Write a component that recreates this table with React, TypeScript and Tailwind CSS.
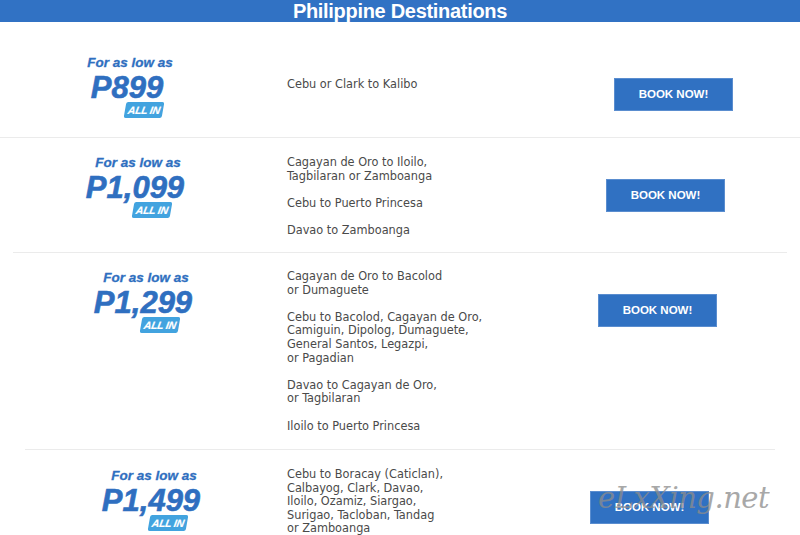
import React from 'react';

type Deal = {
  price: string;
  routes: string[][];
  rowH: string;
  priceMl: string;
  padTop: string;
  textTop: string;
  btnTop: string;
  btnMr: string;
};

const deals: Deal[] = [
  {
    price: 'P899',
    routes: [['Cebu or Clark to Kalibo']],
    rowH: 'h-[115px]',
    priceMl: 'ml-[70px]',
    padTop: 'pt-[34px]',
    textTop: 'pt-[55px]',
    btnTop: 'pt-[56px]',
    btnMr: 'mr-[67px]',
  },
  {
    price: 'P1,099',
    routes: [
      ['Cagayan de Oro to Iloilo,', 'Tagbilaran or Zamboanga'],
      ['Cebu to Puerto Princesa'],
      ['Davao to Zamboanga'],
    ],
    rowH: 'h-[114px]',
    priceMl: 'ml-[78px]',
    padTop: 'pt-[18px]',
    textTop: 'pt-[17px]',
    btnTop: 'pt-[41px]',
    btnMr: 'mr-[75px]',
  },
  {
    price: 'P1,299',
    routes: [
      ['Cagayan de Oro to Bacolod', 'or Dumaguete'],
      ['Cebu to Bacolod, Cagayan de Oro,', 'Camiguin, Dipolog, Dumaguete,', 'General Santos, Legazpi,', 'or Pagadian'],
      ['Davao to Cagayan de Oro,', 'or Tagbilaran'],
      ['Iloilo to Puerto Princesa'],
    ],
    rowH: 'h-[196px]',
    priceMl: 'ml-[86px]',
    padTop: 'pt-[18px]',
    textTop: 'pt-[16px]',
    btnTop: 'pt-[41px]',
    btnMr: 'mr-[83px]',
  },
  {
    price: 'P1,499',
    routes: [
      ['Cebu to Boracay (Caticlan),', 'Calbayog, Clark, Davao,', 'Iloilo, Ozamiz, Siargao,', 'Surigao, Tacloban, Tandag', 'or Zamboanga'],
    ],
    rowH: 'h-[120px]',
    priceMl: 'ml-[94px]',
    padTop: 'pt-[19px]',
    textTop: 'pt-[17px]',
    btnTop: 'pt-[41px]',
    btnMr: 'mr-[91px]',
  },
];

const dividers = ['mx-0', 'mx-[13px]', 'mx-[25px]'];

function PriceTag({ price }: { price: string }) {
  return (
    <div className="w-[120px] flex flex-col items-center italic font-bold text-[#2f6fc0] [-webkit-text-stroke:0.3px_#2f6fc0] font-['Liberation_Sans',Arial,sans-serif]">
      <div className="text-[13.5px] leading-none">For as low as</div>
      <div className="mt-[2px] pr-[6px] text-[31px] leading-none [-webkit-text-stroke:0.6px_#2f6fc0]">{price}</div>
      <div className="ml-[28px] -mt-[1px]">
        <div className="-skew-x-[10deg] rounded-[2px] bg-[#42a3df] w-[38px] h-[16px] flex items-center justify-center">
          <span className="text-[10.5px] leading-none text-white tracking-[-0.3px] [-webkit-text-stroke:0.2px_#ffffff]">ALL IN</span>
        </div>
      </div>
    </div>
  );
}

export default function App() {
  return (
    <div className="relative w-[800px] h-[535px] overflow-hidden bg-white">
      <div className="h-[22px] bg-[#3172c4] flex items-center justify-center">
        <h1 className="text-white font-bold text-[20px] leading-none tracking-[-0.3px] font-['Liberation_Sans',Arial,sans-serif]">
          Philippine Destinations
        </h1>
      </div>

      {deals.map((d, i) => (
        <React.Fragment key={d.price}>
          <div className={`flex items-start ${d.rowH}`}>
            <div className={`w-[287px] shrink-0 ${d.padTop}`}>
              <div className={d.priceMl}>
                <PriceTag price={d.price} />
              </div>
            </div>
            <div className={`flex-1 ${d.textTop} text-[12.6px] leading-[13.6px] text-[#4a4a4a] font-['DejaVu_Sans_Condensed','DejaVu_Sans',sans-serif] flex flex-col gap-[13.6px]`}>
              {d.routes.map((para, j) => (
                <p key={j}>
                  {para.map((line, k) => (
                    <React.Fragment key={k}>
                      {line}
                      {k < para.length - 1 && <br />}
                    </React.Fragment>
                  ))}
                </p>
              ))}
            </div>
            <div className={`shrink-0 ${d.btnTop} ${d.btnMr}`}>
              <button className="w-[119px] h-[33px] bg-[#3071c2] border border-[#5a8dcf] text-white font-bold text-[11.5px] font-['Liberation_Sans',Arial,sans-serif]">
                BOOK NOW!
              </button>
            </div>
          </div>
          {i < dividers.length && <div className={`h-px bg-[#ebebeb] ${dividers[i]}`} />}
        </React.Fragment>
      ))}

      {/* watermark */}
      <div className="absolute left-[598px] top-[484px] text-[29px] leading-none italic text-[#8c8c8c] opacity-75 tracking-[-0.5px] font-['DejaVu_Serif',serif] pointer-events-none">
        eLxXing.net
      </div>
    </div>
  );
}
